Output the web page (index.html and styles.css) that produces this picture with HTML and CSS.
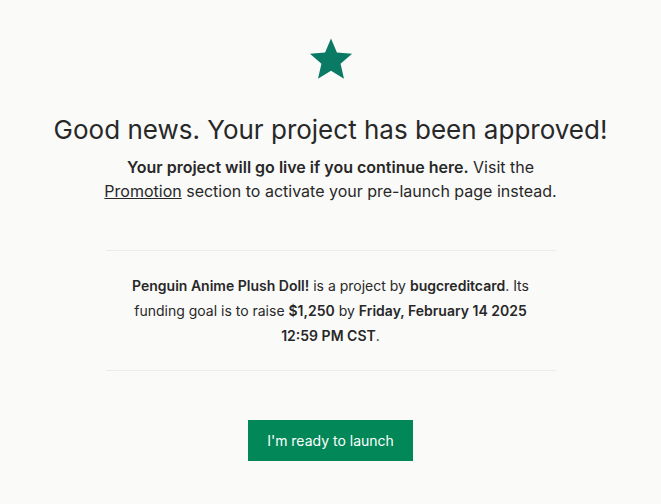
FILE: index.html
```html
<!DOCTYPE html>
<html>
<head>
<meta charset="utf-8">
<link rel="stylesheet" href="styles.css">
</head>
<body>
<main class="page">
  <div class="star">
    <svg width="46" height="44" viewBox="0 0 24 23"><path d="M12 0.8l3.1 7.3 7.9 0.7-6 5.2 1.8 7.8L12 17.7l-6.8 4.1 1.8-7.8-6-5.2 7.9-0.7z" fill="#0a7a64"/></svg>
  </div>
  <h1 class="title">Good news. Your project has been approved!</h1>
  <p class="lead"><strong>Your project will go live if you continue here.</strong> Visit the <a class="link" href="#">Promotion</a> section to activate your pre-launch page instead.</p>
  <section class="summary">
    <p><strong>Penguin Anime Plush Doll!</strong> is a project by <strong>bugcreditcard</strong>. Its funding goal is to raise <strong>$1,250</strong> by <strong>Friday, February 14 2025 12:59 PM CST</strong>.</p>
  </section>
  <div class="actions">
    <button class="btn">I'm ready to launch</button>
  </div>
</main>
</body>
</html>
```

FILE: styles.css
```css
html, body {
  margin: 0;
  padding: 0;
  background: #fafaf9;
}
body {
  font-family: Inter, "Noto Sans", sans-serif;
  color: #282828;
}
.page {
  display: flex;
  flex-direction: column;
  align-items: center;
  padding-top: 37px;
}
.star {
  height: 44px;
  display: flex;
}
.title {
  margin: 31px 0 0;
  font-size: 26px;
  font-weight: 400;
  line-height: 36px;
  letter-spacing: 0;
}
.lead {
  margin: 7px 0 0;
  width: 455px;
  text-align: center;
  font-size: 16px;
  line-height: 24px;
}
.lead strong { font-weight: 600; }
.link {
  color: #282828;
  text-decoration: underline;
}
.summary {
  margin-top: 47px;
  width: 450px;
  border-top: 1px solid #ebebea;
  border-bottom: 1px solid #ebebea;
  padding: 22px 0 22px;
}
.summary p {
  margin: 0 auto;
  width: 410px;
  text-align: center;
  font-size: 14px;
  line-height: 25px;
}
.summary strong { font-weight: 600; }
.actions {
  margin-top: 49px;
}
.btn {
  background: #028858;
  color: #fff;
  border: 0;
  font-family: Inter, sans-serif;
  font-size: 14px;
  width: 165px;
  height: 41px;
  padding: 0;
}
```
